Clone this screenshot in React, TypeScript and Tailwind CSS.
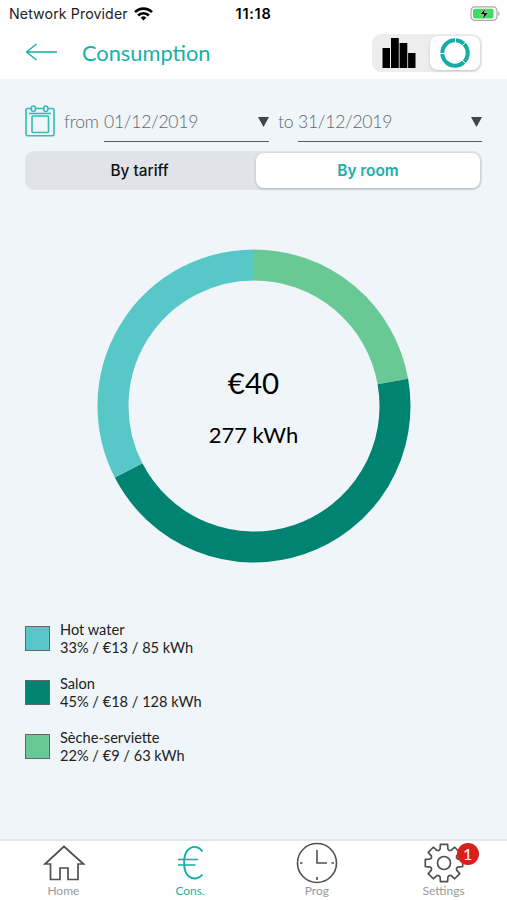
import * as React from "react"

const slices = [
  { name: "Hot water", detail: "33% / €13 / 85 kWh", swatch: "bg-[#57c8c7]" },
  { name: "Salon", detail: "45% / €18 / 128 kWh", swatch: "bg-[#008371]" },
  { name: "Sèche-serviette", detail: "22% / €9 / 63 kWh", swatch: "bg-[#69c995]" },
]

// start and end angles in degrees, clockwise from the top
const arcs = [
  { from: 0, to: 80, color: "#69c995" },
  { from: 80, to: 242.8, color: "#008371" },
  { from: 242.8, to: 360, color: "#57c8c7" },
]

function point(r: number, deg: number) {
  const a = (deg * Math.PI) / 180
  return `${(157 + r * Math.sin(a)).toFixed(2)} ${(157 - r * Math.cos(a)).toFixed(2)}`
}

function arcPath(from: number, to: number) {
  return `M${point(141, from)}A141 141 0 ${to - from > 180 ? 1 : 0} 1 ${point(141, to)}`
}

// one tooth every 45 degrees
const gearPoints = Array.from({ length: 8 }, (_, i) => {
  const a = (i * Math.PI) / 4
  return [
    [-5.2, -12.5],
    [-3.9, -14],
    [-3.6, -18.7],
    [3.6, -18.7],
    [3.9, -14],
    [5.2, -12.5],
  ]
    .map(([x, y]) =>
      `${(21 + x * Math.cos(a) - y * Math.sin(a)).toFixed(2)},${(21 + x * Math.sin(a) + y * Math.cos(a)).toFixed(2)}`
    )
    .join(" ")
}).join(" ")

function StatusBar() {
  return (
    <div className="grid h-7 grid-cols-[1fr_auto_1fr] items-center pl-[9px] pr-[7px] font-['Inter',sans-serif] text-[#222]">
      <div className="flex items-center gap-[6px]">
        <span className="text-[14.2px] tracking-[0.1px]">Network Provider</span>
        <svg width="19" height="14" viewBox="0 0 19 14" fill="none" stroke="#000" strokeWidth="2.6">
          <path d="M1 5.2a12 12 0 0 1 17 0" />
          <path d="M4.1 8.5a7.6 7.6 0 0 1 10.8 0" />
          <path d="M9.5 13.5 6.7 10.7a4 4 0 0 1 5.6 0Z" fill="#000" stroke="none" />
        </svg>
      </div>
      <span className="-ml-[2px] text-[14.5px] font-semibold tracking-[0.7px] text-black">11:18</span>
      <svg className="justify-self-end" width="30" height="16" viewBox="0 0 30 16">
        <rect x="1" y=".8" width="26" height="13.6" rx="4" fill="#fff" stroke="#aaa" strokeWidth="1.2" />
        <rect x="3" y="2.8" width="20.5" height="9.6" rx="2" fill="#3ddc62" />
        <path d="M28.2 5.5c2 .7 2 3.7 0 4.4Z" fill="#aaa" />
        <path d="m15.8 1.8-6 6.7h4l-1.6 5.2 6.3-7h-4.2Z" fill="#000" stroke="#dff8e4" strokeWidth=".6" />
      </svg>
    </div>
  )
}

function Header() {
  return (
    <header className="flex h-[50px] items-center px-[25px]">
      <svg className="-mt-[2px]" width="32" height="20" viewBox="0 0 32 20" fill="none" stroke="#19b0a8" strokeWidth="1.3">
        <path d="M32 10H1.5M11.5 2 1.5 10l10 8" />
      </svg>
      <h1 className="ml-[25px] text-[21.8px] leading-none text-[#19b0a8]">Consumption</h1>
      <div className="ml-auto flex h-[38px] w-[110px] items-center rounded-[9px] bg-[#ededee] p-[2px]">
        <svg className="ml-[8px]" width="34" height="30" viewBox="0 0 34 30">
          <path d="M.5 10H8v20H.5ZM9 0h7.8v30H9ZM17.6 5h7.7v25h-7.7ZM26.1 15h7.4v15h-7.4Z" />
        </svg>
        <div className="ml-auto flex h-[34px] w-[50px] items-center justify-center rounded-lg bg-white shadow-[0_1px_3px_rgba(0,0,0,0.18)]">
          <svg width="30" height="30" viewBox="0 0 30 30" fill="none">
            <circle cx="15" cy="15" r="12.7" stroke="#12aea5" strokeWidth="4" />
            <path d="M15.5 0v6M21.5 8.5 26 4M20.5 20.5l5 5M0 15.5h5" stroke="#fff" strokeWidth="1" />
          </svg>
        </div>
      </div>
    </header>
  )
}

function DateField({ value, className }: { value: string; className: string }) {
  return (
    <div className={`flex h-[39px] items-center justify-between border-b border-[#565b5f] ${className}`}>
      <span>{value}</span>
      <svg width="11" height="10" viewBox="0 0 11 10">
        <path d="M0 0h11L5.5 10Z" fill="#414649" />
      </svg>
    </div>
  )
}

function CalendarIcon() {
  return (
    <svg className="-mt-[3px]" width="30" height="32" viewBox="0 0 30 32" fill="none" stroke="#35bdb5" strokeWidth="1.6">
      <rect x="1" y="3.5" width="28" height="27.2" rx="1.5" />
      <path d="M4 8.5h22" />
      <rect x="7" y="11" width="16.5" height="16.5" rx="1" />
      <rect x="6.4" y="1" width="4" height="5.5" rx="2" fill="#eff5f9" />
      <rect x="18.8" y="1" width="4" height="5.5" rx="2" fill="#eff5f9" />
    </svg>
  )
}

function Chart() {
  return (
    <div className="mx-auto mt-[59px] grid h-[314px] w-[314px] place-items-center">
      <svg className="col-start-1 row-start-1" width="314" height="314" fill="none">
        {arcs.map((arc) => (
          <path key={arc.from} d={arcPath(arc.from, arc.to)} stroke={arc.color} strokeWidth="31" />
        ))}
      </svg>
      <div className="col-start-1 row-start-1 flex flex-col items-center pt-[2px] text-black">
        <span className="text-[29.5px] leading-9">€40</span>
        <span className="mt-[20px] text-[22px] leading-7">277 kWh</span>
      </div>
    </div>
  )
}

function TabItem({ label, active, children }: { label: string; active?: boolean; children: React.ReactNode }) {
  return (
    <div className={`flex flex-1 flex-col items-center ${active ? "text-[#19b0a8]" : "text-[#999]"}`}>
      <div className="relative mt-[1px] h-[42px] w-[42px]">{children}</div>
      <span className="text-[12px] leading-[14px]">{label}</span>
    </div>
  )
}

function TabBar() {
  return (
    <nav className="flex h-[61px] border-t-2 border-[#e3e7ea] bg-white">
      <TabItem label="Home">
        <svg width="44" height="42" fill="none" stroke="#505050" strokeWidth="1.7">
          <path d="M22 4.5 3 22h5.500v15.500h9.500V26h8v11.500h10V22h5.500Z" />
        </svg>
      </TabItem>
      <TabItem label="Cons." active>
        <svg width="42" height="42" fill="none" stroke="#12aea5" strokeWidth="1.9">
          <path d="M33.5 9.5C30 4.5 24.5 3.5 20 7c-6.500 5-6.500 22.500 0 27.500 4.500 3.500 10.500 2 13.500-2" />
          <path d="M9 17.500H29M9 23H26.500" strokeWidth="1.3" />
        </svg>
      </TabItem>
      <TabItem label="Prog">
        <svg width="42" height="42" fill="none" stroke="#505050" strokeWidth="1.6">
          <circle cx="21" cy="21" r="19.5" />
          <path d="M21 8v13h10M21 35v3M4 21h2.500M35.500 21H38" />
        </svg>
      </TabItem>
      <TabItem label="Settings">
        <svg width="42" height="42" fill="none" stroke="#505050" strokeWidth="1.7" strokeLinejoin="round">
          <polygon points={gearPoints} />
          <circle cx="21" cy="21" r="6.5" />
        </svg>
        <span className="absolute left-[34px] top-[1px] flex h-[22px] w-[22px] items-center justify-center rounded-full bg-[#d71f1c] text-[16px] text-white">
          1
        </span>
      </TabItem>
    </nav>
  )
}

export default function App() {
  return (
    <div className="flex h-[900px] w-[507px] flex-col overflow-hidden bg-[#eff5f9] font-['Lato',sans-serif]">
      <div className="h-[79px] bg-white">
        <StatusBar />
        <Header />
      </div>
      <main className="flex-1 px-[25px] pt-[24px]">
        <div className="flex items-center text-[17.6px] font-light tracking-[-0.28px] text-[#62676b]">
          <CalendarIcon />
          <span className="ml-[9px] w-[40px]">from</span>
          <DateField value="01/12/2019" className="w-[165px]" />
          <span className="ml-[9px] w-[20px]">to</span>
          <DateField value="31/12/2019" className="w-[184px]" />
        </div>
        <div className="mt-[9px] flex h-[39px] rounded-[9px] bg-[#e0e4e9] p-[2px] font-['Inter',sans-serif] text-[15.4px] font-medium leading-none">
          <div className="flex w-[229px] items-center justify-center pr-[4px] pt-[1px] text-[#111]">By tariff</div>
          <div className="flex flex-1 items-center justify-center rounded-lg bg-white pt-[1px] font-semibold text-[#19b0a8] shadow-[0_1px_3px_rgba(0,0,0,0.2)]">
            By room
          </div>
        </div>
        <Chart />
        <ul className="mt-[57px] flex flex-col gap-[18px] text-[14.6px] leading-[18px] text-[#222]">
          {slices.map((slice) => (
            <li key={slice.name} className="flex h-9 items-center gap-[10px]">
              <span className={`h-[25px] w-[25px] border border-[#666] ${slice.swatch}`} />
              <div className="pt-[2px]">
                <p>{slice.name}</p>
                <p>{slice.detail}</p>
              </div>
            </li>
          ))}
        </ul>
      </main>
      <TabBar />
    </div>
  )
}
